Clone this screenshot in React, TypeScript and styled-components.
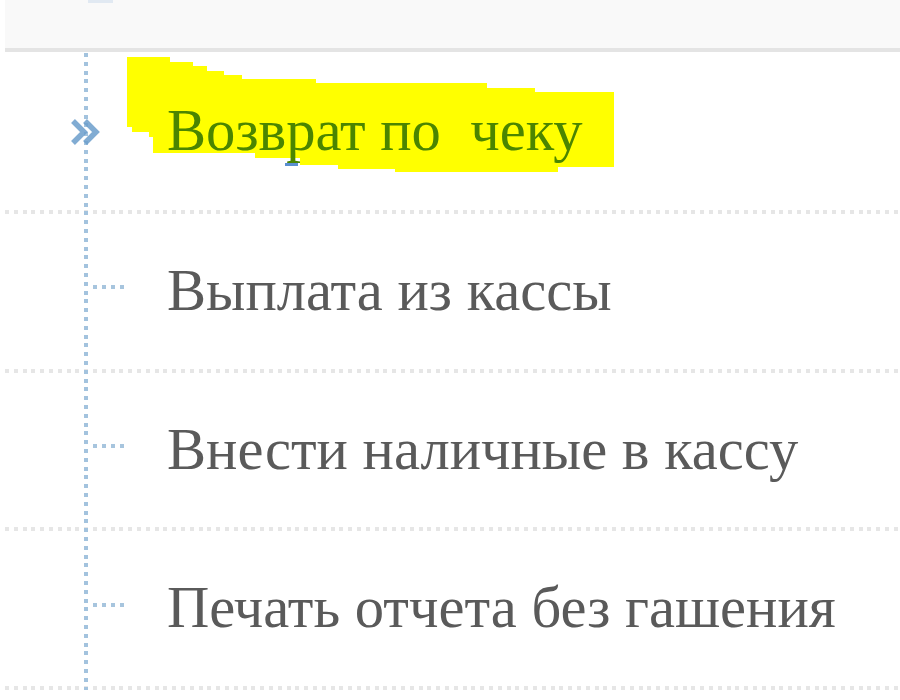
import styled, { createGlobalStyle } from "styled-components";

const GlobalStyle = createGlobalStyle`
  html, body {
    margin: 0;
    padding: 0;
    background: #ffffff;
  }
  body {
    font-family: "Liberation Serif", "Times New Roman", serif;
  }
`;

const Page = styled.div`
  width: 900px;
  height: 700px;
  overflow: hidden;
`;

const TopBar = styled.div`
  margin-left: 5px;
  height: 48px;
  padding-left: 83px;
  background: #f9f9f9;
  border-bottom: 4px solid #e4e4e4;
`;

const TabStub = styled.div`
  width: 25px;
  height: 3px;
  background: #e1e9f2;
`;

const Tree = styled.div`
  position: relative;
  margin-left: 5px;
  padding-top: 1px;

  &::before {
    content: "";
    position: absolute;
    left: 79px;
    top: 1px;
    bottom: 0;
    width: 4px;
    background: repeating-linear-gradient(
      to bottom,
      #a3c3de 0,
      #a3c3de 4px,
      transparent 4px,
      transparent 8.8px
    );
    z-index: 1;
  }
`;

const Row = styled.div<{ $first?: boolean }>`
  position: relative;
  height: ${({ $first }) => ($first ? "157px" : "154.7px")};
  padding-left: 65px;
  padding-bottom: 4px;
  display: flex;
  align-items: center;
  background: repeating-linear-gradient(
      to right,
      #e6e6e6 0,
      #e6e6e6 4px,
      transparent 4px,
      transparent 8.8px
    )
    left bottom / 100% 4px no-repeat;
`;

const Marker = styled.div`
  position: relative;
  width: 97px;
  height: 30px;
  flex-shrink: 0;
  display: flex;
  align-items: center;
  z-index: 2;
`;

const Connector = styled.div`
  margin-left: 23px;
  margin-top: -8px;
  width: 31px;
  height: 4px;
  background: repeating-linear-gradient(
    to right,
    #a7c5de 0,
    #a7c5de 4px,
    transparent 4px,
    transparent 9px
  );
`;

const Label = styled.span<{ $active?: boolean }>`
  position: relative;
  z-index: 2;
  font-family: "Liberation Serif", "Times New Roman", serif;
  font-size: 58.6px;
  line-height: 1;
  white-space: pre;
  color: ${({ $active }) => ($active ? "#4b8500" : "#5a5a5a")};
`;

const Highlight = styled.svg`
  position: absolute;
  left: -5px;
  top: -53px;
  z-index: 0;
  pointer-events: none;
`;

function Chevron() {
  return (
    <svg width="33" height="30" viewBox="0 0 33 30">
      <path
        d="M3 4 L14 15 L3 26 M15 4 L26 15 L15 26"
        fill="none"
        stroke="#6b9dcb"
        strokeWidth="5.5"
        opacity="0.85"
      />
    </svg>
  );
}

const highlightPoints =
  "127,57 170,57 170,62 193,62 193,66 207,66 207,71 224,71 224,75 242,75 242,79 316,79 316,83 487,83 487,88 535,88 535,92 614,92 614,167 558,167 558,172 395,172 395,169 338,169 338,165 300,165 300,158 255,158 255,153 153,153 153,137 149,137 149,132 132,132 132,127 127,127";

const items = [
  "Возврат по  чеку",
  "Выплата из кассы",
  "Внести наличные в кассу",
  "Печать отчета без гашения",
];

export default function App() {
  return (
    <Page>
      <GlobalStyle />
      <TopBar>
        <TabStub />
      </TopBar>
      <Tree>
        {items.map((text, i) => (
          <Row key={text} $first={i === 0}>
            {i === 0 && (
              <Highlight width="900" height="220" viewBox="0 0 900 220">
                <polygon points={highlightPoints} fill="#ffff00" />
                <rect x="285" y="163" width="13" height="3" fill="#5a8fd0" />
              </Highlight>
            )}
            <Marker>{i === 0 ? <Chevron /> : <Connector />}</Marker>
            <Label $active={i === 0}>{text}</Label>
          </Row>
        ))}
      </Tree>
    </Page>
  );
}
